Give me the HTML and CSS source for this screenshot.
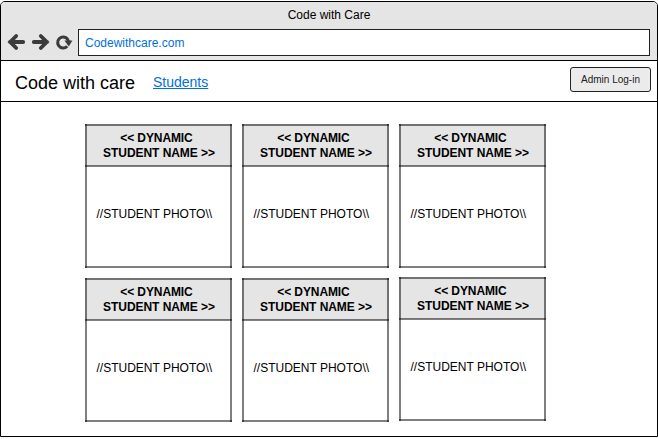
FILE: index.html
```
<!DOCTYPE html>
<html lang="en">
<head>
<meta charset="utf-8">
<title>Code with Care</title>
<link rel="stylesheet" href="styles.css">
</head>
<body>
<div class="window">
  <header class="chrome">
    <div class="title">Code with Care</div>
    <div class="toolbar">
      <svg class="controls" width="66" height="18" viewBox="7 33 66 18" fill="none" stroke="#3b3b3b">
        <path d="M10 42H23.2M16.2 36L10.2 42L16.2 48" stroke-width="3.8" stroke-linecap="round"/>
        <path d="M33.8 42H47M40.8 36L46.8 42L40.8 48" stroke-width="3.8" stroke-linecap="round"/>
        <path d="M67.2 46.2A5.5 5.5 0 1 1 68.6 41.5" stroke-width="3"/>
        <path d="M64.4 40.6H72.4L68.8 46.6Z" fill="#3b3b3b" stroke="none"/>
      </svg>
      <div class="address">Codewithcare.com</div>
    </div>
  </header>
  <nav class="nav">
    <div class="brand">Code with care</div>
    <a class="link" href="#">Students</a>
    <button class="login" type="button">Admin Log-in</button>
  </nav>
  <main class="students">
    <div class="column">
      <section class="card"><h2><span>&lt;&lt; DYNAMIC</span><br>STUDENT NAME &gt;&gt;</h2><p>//STUDENT PHOTO\\</p></section>
      <section class="card"><h2><span>&lt;&lt; DYNAMIC</span><br>STUDENT NAME &gt;&gt;</h2><p>//STUDENT PHOTO\\</p></section>
    </div>
    <div class="column">
      <section class="card"><h2><span>&lt;&lt; DYNAMIC</span><br>STUDENT NAME &gt;&gt;</h2><p>//STUDENT PHOTO\\</p></section>
      <section class="card"><h2><span>&lt;&lt; DYNAMIC</span><br>STUDENT NAME &gt;&gt;</h2><p>//STUDENT PHOTO\\</p></section>
    </div>
    <div class="column column-tight">
      <section class="card"><h2><span>&lt;&lt; DYNAMIC</span><br>STUDENT NAME &gt;&gt;</h2><p>//STUDENT PHOTO\\</p></section>
      <section class="card"><h2><span>&lt;&lt; DYNAMIC</span><br>STUDENT NAME &gt;&gt;</h2><p>//STUDENT PHOTO\\</p></section>
    </div>
  </main>
</div>
</body>
</html>
```
FILE: styles.css
```
* { box-sizing: border-box; }
body {
  margin: 0;
  padding-top: 1px;
  background: #fff;
  color: #000;
  font: 12px/15px "Liberation Sans", Arial, sans-serif;
  overflow: hidden;
}
.window {
  width: 658px;
  height: 436px;
  border: 1px solid #000;
  border-radius: 5px 5px 0 0;
  overflow: hidden;
}
.chrome {
  height: 59px;
  background: #e5e5e5;
  border-bottom: 1px solid #000;
}
.title {
  height: 27px;
  padding-top: 6px;
  text-align: center;
}
.toolbar {
  display: flex;
  padding: 0 7px 0 6px;
}
.controls {
  flex: none;
  margin: 4px 5px 0 0;
}
.address {
  flex: 1;
  height: 27px;
  padding: 1px 6px 0;
  border: 1px solid #222;
  background: #fff;
  color: #0070e0;
  line-height: 25px;
}
.nav {
  display: flex;
  align-items: center;
  height: 41px;
  padding: 0 6px 0 14px;
  border-bottom: 1px solid #000;
}
.brand {
  width: 138px;
  padding-top: 3px;
  font-size: 18px;
  line-height: 20px;
  white-space: nowrap;
}
.link {
  padding-top: 2px;
  color: #0070e0;
  font-size: 14px;
  line-height: 16px;
}
.login {
  width: 81px;
  height: 25px;
  margin: 0 0 3px auto;
  padding: 0;
  border: 1px solid #222;
  border-radius: 3px;
  background: #ebebeb;
  color: #222;
  font: 10px/12px "Liberation Sans", Arial, sans-serif;
}
.students {
  display: flex;
  gap: 10px;
  padding: 22px 0 0 84px;
}
.column {
  display: flex;
  flex-direction: column;
  gap: 10px;
}
.column-tight { gap: 9px; }
/* Translucent rules overlap at the corners, so each joint reads darker. */
.card {
  --rule: linear-gradient(rgba(0, 0, 0, .5), rgba(0, 0, 0, .5));
  width: 147px;
  height: 144px;
  background:
    var(--rule) 0 0 / 100% 2px no-repeat,
    var(--rule) 0 41px / 100% 2px no-repeat,
    var(--rule) 0 100% / 100% 2px no-repeat,
    var(--rule) 0 0 / 2px 100% no-repeat,
    var(--rule) 100% 0 / 2px 100% no-repeat,
    linear-gradient(#e5e5e5, #e5e5e5) 0 0 / 100% 42px no-repeat;
}
.card h2 {
  height: 43px;
  margin: 0;
  padding: 7px 0 0 1px;
  font-size: 12px;
  line-height: 15px;
  letter-spacing: -.05px;
  text-align: center;
}
.card h2 span {
  margin-right: 5px;
  letter-spacing: -.1px;
}
.card p {
  margin: 0;
  padding: 40px 0 0 11.5px;
  white-space: nowrap;
}
```
